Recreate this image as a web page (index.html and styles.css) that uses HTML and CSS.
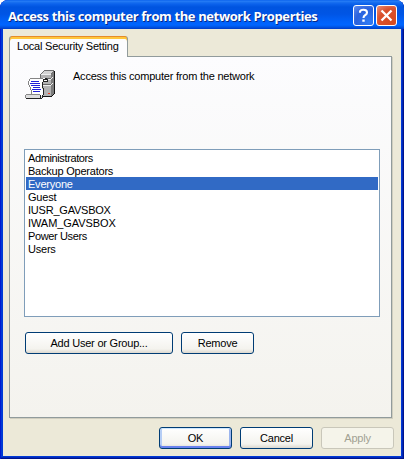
FILE: index.html
```html
<!DOCTYPE html>
<html lang="en">
<head>
<meta charset="utf-8">
<title>Access this computer from the network Properties</title>
<link rel="stylesheet" href="styles.css">
</head>
<body>
<div class="window">
  <header class="titlebar">
    <h1 class="title">Access this computer from the network Properties</h1>
    <button class="cap help" aria-label="Help"><svg width="21" height="21" viewBox="0 0 21 21"><path d="M7 7.7V7q0-2.2 3.5-2.2T14 7.4q0 1.6-1.7 2.6-1.8 1-1.8 3" fill="none" stroke="#fff" stroke-width="2.1"/><path d="M9.3 14.5h2.4v2.3H9.3z" fill="#fff"/></svg></button>
    <button class="cap close" aria-label="Close"><svg width="21" height="21" viewBox="0 0 21 21"><path d="M5.5 5.5l10 10M15.5 5.5l-10 10" stroke="#fff" stroke-width="2.3"/></svg></button>
  </header>
  <main class="client">
    <div class="tab">Local Security Setting</div>
    <section class="panel">
      <div class="intro">
        <svg class="icon" width="32" height="32" viewBox="0 0 32 32" shape-rendering="crispEdges">
          <path d="M15 4h1V3h1V2h1V1h1V0h10v1h1v23h-1v1h-1v1h-1v1H15z" fill="#6e6e6e"/>
          <path d="M16 4l3-3h9l-2 3z" fill="#d4d4d4"/>
          <path d="M16 4h10v22H16z" fill="#b2b2b2"/>
          <path d="M26 4l3-3v23l-3 2z" fill="#7c7c7c"/>
          <path d="M29 1h1v23h-1zM28 24h1v1h-1zM27 25h1v1h-1zM17 26h10v1H17z" fill="#151515"/>
          <path d="M16 4h10v1H16zM16 9h10v1H16zM16 15h10v1H16zM26 8h1v1h-1zM27 7h1v1h-1zM26 14h1v1h-1zM27 13h1v1h-1z" fill="#eee"/>
          <path d="M16 8h10v1H16zM18 14h8v1h-8z" fill="#666"/>
          <path d="M23 23h2v1h-2z" fill="#f04020"/>
          <path d="M5 8h16v1h1v3h-5v7h1v6h-1v1H6v-6H5v-3H4v-2H3v-5h1V9h1z" fill="#fff"/>
          <path d="M5 8h13v1H5zM4 9h1v2H4zM3 11h1v4H3zM4 15h1v2H4zM5 17h1v3H5zM6 20h1v5H6z" fill="#858585"/>
          <path d="M18 9h2V8h2v1h1v3h-5v-1h4v-1h-3v1h-1zM17 12h1v6h-1zM18 18h1v7h-1z" fill="#222"/>
          <path d="M6 11h8v1H6zM5 13h10v1H5zM6 15h9v1H6zM8 17h7v1H8zM7 19h9v1H7zM8 21h7v1H8z" fill="#2020d8"/>
          <path d="M0 25h15v1h2v2H0z" fill="#dedede"/>
          <path d="M1 24h14v1H1zM0 25h1v3H0z" fill="#888"/>
          <path d="M1 28h16v1H1zM17 25h1v3h-1zM15 25h1v3h-1z" fill="#222"/>
        </svg>
        <p class="desc">Access this computer from the network</p>
      </div>
      <ul class="list">
        <li class="tight">Administrators</li>
        <li>Backup Operators</li>
        <li class="selected">Everyone</li>
        <li>Guest</li>
        <li>IUSR_GAVSBOX</li>
        <li class="loose">IWAM_GAVSBOX</li>
        <li class="tight">Power Users</li>
        <li>Users</li>
      </ul>
      <div class="actions">
        <button class="btn wide">Add User or Group...</button>
        <button class="btn">Remove</button>
      </div>
    </section>
    <footer class="footer">
      <button class="btn default">OK</button>
      <button class="btn">Cancel</button>
      <button class="btn" disabled>Apply</button>
    </footer>
  </main>
</div>
</body>
</html>
```
FILE: styles.css
```css
* { box-sizing: border-box; margin: 0; padding: 0; }
body { width: 404px; height: 459px; overflow: hidden; background: #fff; font: 11px/13px "Liberation Sans", Arial, sans-serif; color: #000; letter-spacing: -0.22px; }
button { font: inherit; color: inherit; letter-spacing: inherit; }
.window { width: 404px; height: 459px; padding: 0 3px 3px; border-radius: 8px 8px 0 0; background: #0039d6; box-shadow: inset 1px 0 #0019cf, inset -1px -1px #00138c, inset -2px -2px #0028b8; overflow: hidden; }
.titlebar { height: 29px; margin: 0 -3px; padding: 5px 7px 0 8px; display: flex; gap: 2px; background: linear-gradient(#0058e8 0, #2a80f8 1px, #1b72f0 2px, #0b62ec 4px, #0054e0 7px, #0055e5 14px, #0062fb 22px, #0065ff 25px, #0055e5 27px, #003bc4 29px); }
.title { flex: 1; font: bold 13px/22px "Open Sans", sans-serif; color: #fff; white-space: nowrap; text-shadow: 1px 1px #0a2a84; letter-spacing: -0.38px; }
.cap { width: 21px; height: 21px; border: 1px solid #fff; border-radius: 3px; display: flex; align-items: center; justify-content: center; }
.cap svg { flex: none; }
.help { background: radial-gradient(circle at 80% 85%, #2f7bf5, #2b62dc 60%, #5f8cf0); }
.close { background: radial-gradient(circle at 80% 85%, #d64a20, #d9512d 60%, #ec9078); }
.client { height: 427px; padding: 7px 6px 0; background: #ece9d8; }
.tab { position: relative; z-index: 1; width: 119px; height: 21px; padding: 4px 0 0 7px; background: #fcfcfe; border: 1px solid #919b9c; border-top: 0; border-bottom: 0; border-radius: 3px 3px 0 0; box-shadow: inset 0 1px #e68b2c, inset 0 3px #ffc73c; white-space: nowrap; }
.panel { width: 383px; height: 362px; margin-top: -1px; padding: 0 14px; border: 1px solid #919b9c; background: linear-gradient(#fcfcfe, #f4f3ee); box-shadow: 1px 1px #d0cebf; }
.intro { height: 92px; padding: 13px 0 0 1px; display: flex; }
.icon { flex: none; }
.desc { padding-left: 16px; }
.list { height: 168px; width: 356px; padding: 1px; border: 1px solid #7f9db9; background: #fff; list-style: none; }
.list li { height: 13px; padding-left: 2px; line-height: 15px; }
.tight { letter-spacing: -0.38px; }
.loose { letter-spacing: -0.08px; }
.list .selected { background: #316ac5; color: #fff; }
.actions { display: flex; gap: 8px; padding: 15px 0 0 1px; }
.btn { width: 73px; height: 22px; border: 1px solid #003c74; border-radius: 3px; background: linear-gradient(#fff, #f4f3ee 80%, #dcd8cf); text-align: center; white-space: nowrap; }
.wide { width: 148px; }
.default { box-shadow: inset 0 1px #cee7ff, inset 0 -2px #6982ee, inset 2px 0 #b5cdf5, inset -2px 0 #9cb5ee; }
.btn:disabled { border-color: #c9c7ba; background: #f5f4ea; color: #a1a192; }
.footer { display: flex; gap: 8px; padding: 9px 0 0 150px; }
```
